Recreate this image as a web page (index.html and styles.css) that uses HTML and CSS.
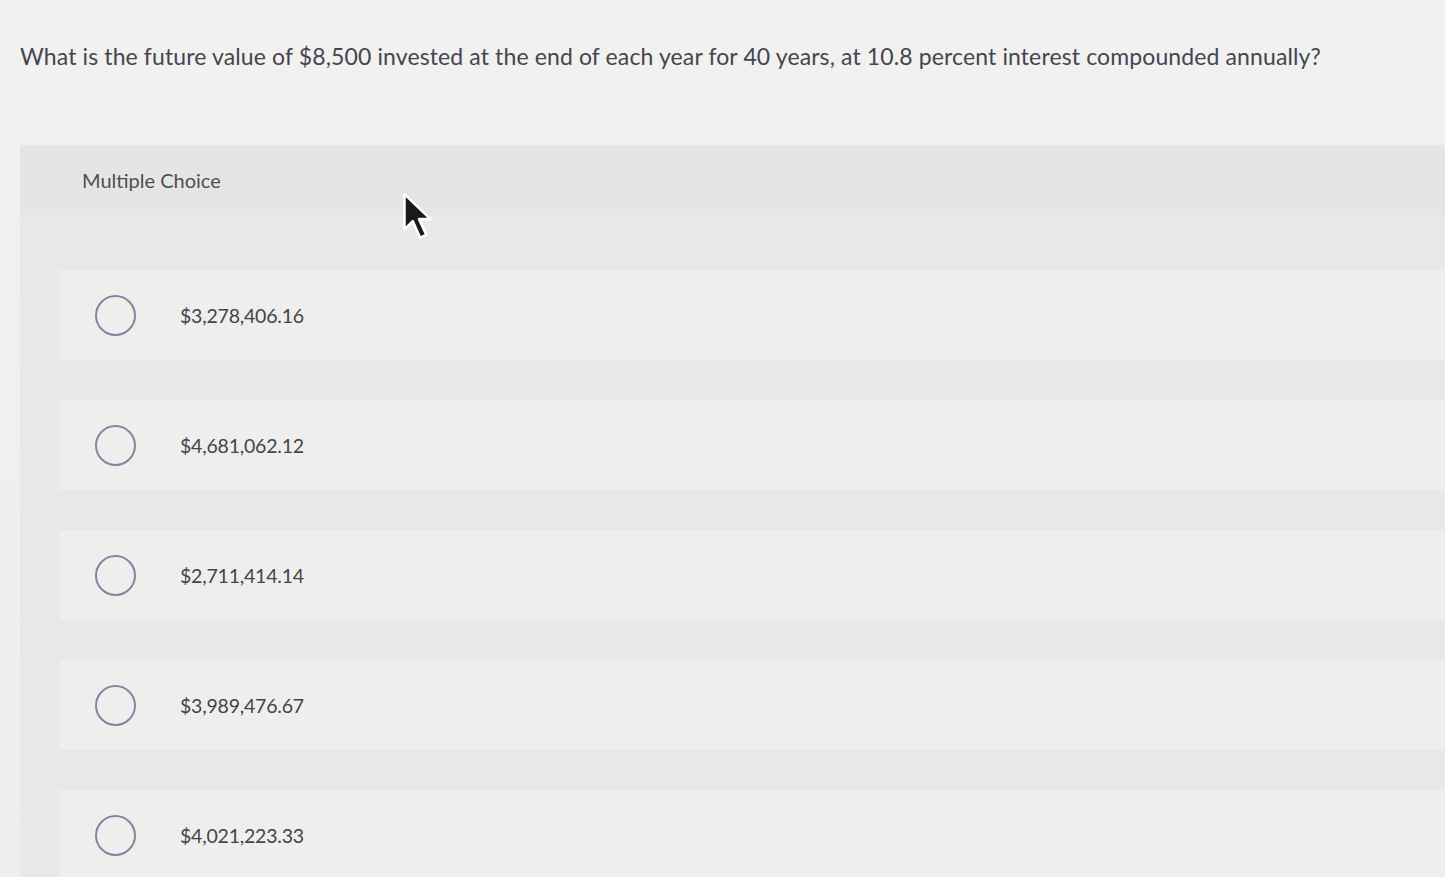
FILE: index.html
```html
<!DOCTYPE html>
<html>
<head>
<meta charset="utf-8">
<link rel="stylesheet" href="styles.css">
</head>
<body>
<div class="page">
  <p class="question">What is the future value of $8,500 invested at the end of each year for 40 years, at 10.8 percent interest compounded annually?</p>
  <div class="panel">
    <div class="panel-head">Multiple Choice</div>
    <div class="options">
      <div class="option"><span class="radio"></span><span class="label">$3,278,406.16</span></div>
      <div class="option"><span class="radio"></span><span class="label">$4,681,062.12</span></div>
      <div class="option"><span class="radio"></span><span class="label">$2,711,414.14</span></div>
      <div class="option"><span class="radio"></span><span class="label">$3,989,476.67</span></div>
      <div class="option"><span class="radio"></span><span class="label">$4,021,223.33</span></div>
    </div>
  </div>
  <svg class="cursor" width="32" height="50" viewBox="0 0 30 48">
    <path d="M2 2 L2 36 L10 28 L17 44 L23 41 L16 26 L27 26 Z" fill="#1a1a1e" stroke="#ffffff" stroke-width="2.5" stroke-linejoin="round"/>
  </svg>
</div>
</body>
</html>
```
FILE: styles.css
```css
html, body {
  margin: 0;
  padding: 0;
  height: 100%;
  overflow: hidden;
  background: #efefed;
}
.page {
  position: relative;
  height: 877px;
  font-family: "Lato", "Liberation Sans", sans-serif;
  background: linear-gradient(#f1f1ef, #eeeeec);
}
.question {
  margin: 0;
  padding: 42px 0 0 20px;
  height: 145px;
  box-sizing: border-box;
  font-size: 23px;
  line-height: 28px;
  letter-spacing: 0.12px;
  color: #45454f;
  white-space: nowrap;
}
.panel {
  margin-left: 20px;
  background: #e8e8e6;
  height: 732px;
}
.panel-head {
  height: 70px;
  display: flex;
  align-items: center;
  padding-left: 62px;
  font-size: 20px;
  color: #4e4e56;
  background: #e5e5e3;
}
.options {
  display: flex;
  flex-direction: column;
  gap: 40px;
  padding-top: 55px;
  padding-left: 40px;
}
.option {
  height: 90px;
  background: #eeeeec;
  display: flex;
  align-items: center;
  padding-left: 35px;
}
.radio {
  width: 41px;
  height: 41px;
  border: 2px solid #7f87a3;
  border-radius: 50%;
  box-sizing: border-box;
  flex: none;
}
.label {
  margin-left: 44px;
  font-size: 19.5px;
  color: #444448;
  letter-spacing: -0.2px;
}
.cursor {
  position: absolute;
  left: 402px;
  top: 192px;
}
```
